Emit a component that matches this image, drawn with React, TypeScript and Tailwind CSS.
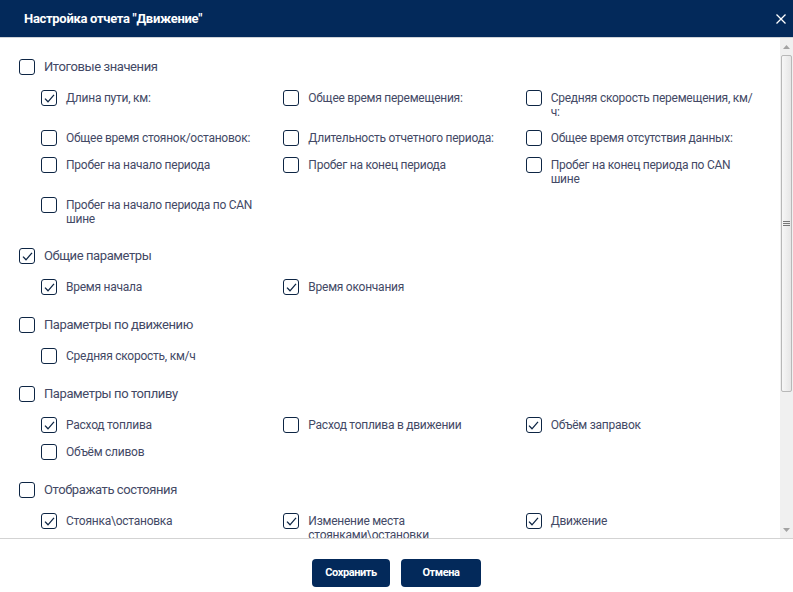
import React from "react";

type Item = { label: string; checked: boolean };
type Section = { title: string; checked: boolean; items: Item[] };

const sections: Section[] = [
    {
        title: "Итоговые значения",
        checked: false,
        items: [
            { label: "Длина пути, км:", checked: true },
            { label: "Общее время перемещения:", checked: false },
            { label: "Средняя скорость перемещения, км/ч:", checked: false },
            { label: "Общее время стоянок/остановок:", checked: false },
            { label: "Длительность отчетного периода:", checked: false },
            { label: "Общее время отсутствия данных:", checked: false },
            { label: "Пробег на начало периода", checked: false },
            { label: "Пробег на конец периода", checked: false },
            { label: "Пробег на конец периода по CAN шине", checked: false },
            { label: "Пробег на начало периода по CAN шине", checked: false },
        ],
    },
    {
        title: "Общие параметры",
        checked: true,
        items: [
            { label: "Время начала", checked: true },
            { label: "Время окончания", checked: true },
        ],
    },
    {
        title: "Параметры по движению",
        checked: false,
        items: [{ label: "Средняя скорость, км/ч", checked: false }],
    },
    {
        title: "Параметры по топливу",
        checked: false,
        items: [
            { label: "Расход топлива", checked: true },
            { label: "Расход топлива в движении", checked: false },
            { label: "Объём заправок", checked: true },
            { label: "Объём сливов", checked: false },
        ],
    },
    {
        title: "Отображать состояния",
        checked: false,
        items: [
            { label: "Стоянка\\остановка", checked: true },
            { label: "Изменение места стоянками\\остановки", checked: true },
            { label: "Движение", checked: true },
        ],
    },
];

const Checkbox: React.FC<{ checked: boolean }> = ({ checked }) => (
    <span className="w-4 h-4 shrink-0 rounded-[3px] border-[1.5px] border-[#0d2544] bg-white flex items-center justify-center">
        {checked && (
            <svg width="13" height="13" viewBox="0 0 13 13" fill="none">
                <path d="M2 6.6 L5 9.8 L11 2.8" stroke="#0d2544" strokeWidth="1.3" />
            </svg>
        )}
    </span>
);

const ScrollBar: React.FC = () => (
    <div className="w-[13px] shrink-0 bg-[#f0f0f0] flex flex-col">
        <div className="h-[17px] flex items-center justify-center">
            <svg width="7" height="4" viewBox="0 0 7 4">
                <path d="M0 4 L3.5 0 L7 4 Z" fill="#a3a3a3" />
            </svg>
        </div>
        <div className="flex-1 flex flex-col">
            <div className="h-[337px] mx-[1px] rounded-[2px] border border-[#b8b8b8] bg-gradient-to-r from-[#f7f7f7] to-[#e6e6e6] flex items-center justify-center">
                <div className="flex flex-col gap-[1px]">
                    <span className="block w-[7px] h-[1px] bg-[#777]"></span>
                    <span className="block w-[7px] h-[1px] bg-[#777]"></span>
                    <span className="block w-[7px] h-[1px] bg-[#777]"></span>
                </div>
            </div>
        </div>
        <div className="h-[17px] flex items-center justify-center">
            <svg width="7" height="4" viewBox="0 0 7 4">
                <path d="M0 0 L3.5 4 L7 0 Z" fill="#a3a3a3" />
            </svg>
        </div>
    </div>
);

export default function App() {
    return (
        <div className="w-[793px] h-[592px] bg-white flex flex-col overflow-hidden" style={{ fontFamily: "Roboto, 'Noto Sans', sans-serif" }}>
            {/* Header */}
            <div className="h-[37px] shrink-0 bg-[#03295a] flex items-center justify-between pl-6 pr-[6px]">
                <span className="text-white text-[13px] font-bold tracking-[-0.3px]">Настройка отчета "Движение"</span>
                <svg width="12" height="12" viewBox="0 0 12 12">
                    <path d="M1.5 1.5 L10.5 10.5 M10.5 1.5 L1.5 10.5" stroke="#fff" strokeWidth="1.3" />
                </svg>
            </div>
            <div className="h-px bg-[#cfd3d8] shrink-0"></div>

            {/* Body */}
            <div className="h-[500px] shrink-0 flex">
                <div className="flex-1 overflow-hidden pt-[21px] pl-[19px] pr-[12px] flex flex-col gap-[22px]">
                    {sections.map((s, i) => (
                        <div key={i} className="flex flex-col gap-[15px]">
                            <div className="flex items-start gap-[9px]">
                                <Checkbox checked={s.checked} />
                                <span className="text-[13px] leading-4 text-[#434965] tracking-[-0.4px]">{s.title}</span>
                            </div>
                            <div className="ml-[22px] grid grid-cols-3 gap-y-[11px]">
                                {s.items.map((it, j) => (
                                    <div key={j} className="flex items-start gap-[9px] pr-[12px]">
                                        <Checkbox checked={it.checked} />
                                        <span className="mt-px text-[12px] leading-[14px] text-[#434965] tracking-[-0.25px]">{it.label}</span>
                                    </div>
                                ))}
                            </div>
                        </div>
                    ))}
                </div>
                <ScrollBar />
            </div>

            {/* Footer */}
            <div className="h-px bg-[#d3d3d3] shrink-0"></div>
            <div className="flex justify-center gap-[11px] pt-5">
                <button className="w-[78px] h-7 rounded-[4px] bg-[#03295a] text-white text-[11px] font-bold tracking-[-0.4px]">Сохранить</button>
                <button className="w-[80px] h-7 rounded-[4px] bg-[#03295a] text-white text-[11px] font-bold tracking-[-0.4px]">Отмена</button>
            </div>
        </div>
    );
}
